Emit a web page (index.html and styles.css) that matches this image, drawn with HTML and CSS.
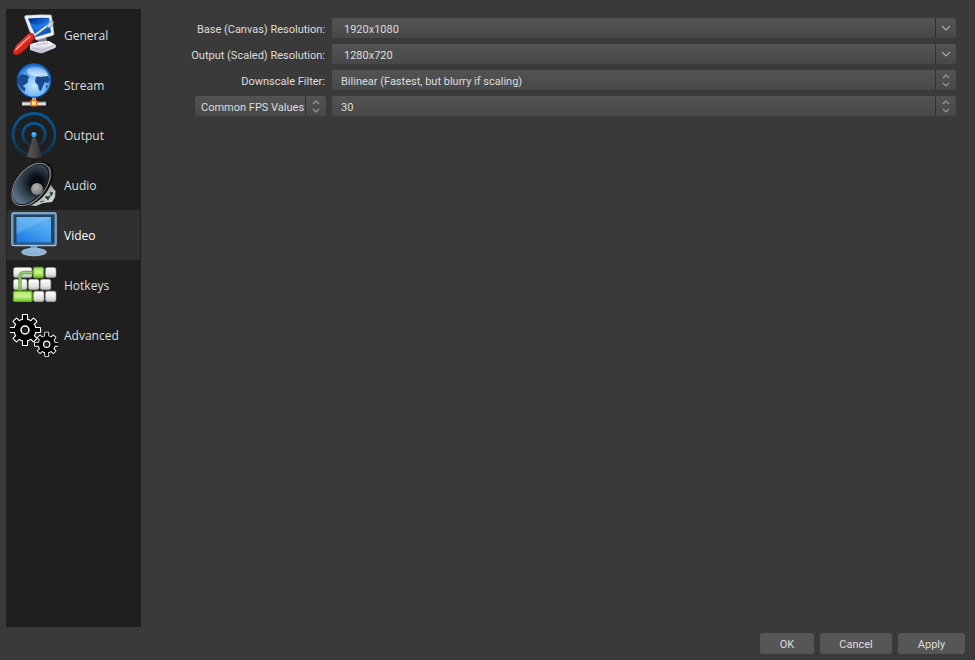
FILE: index.html
```html
<!DOCTYPE html>
<html lang="en">
<head>
<meta charset="utf-8">
<title>Settings</title>
<link rel="stylesheet" href="styles.css">
</head>
<body>
<svg class="defs" aria-hidden="true">
  <defs>
    <linearGradient id="screen" x1="0" y1="0" x2="1" y2="1"><stop offset="0" stop-color="#032d8d"/><stop offset=".5" stop-color="#1269d8"/><stop offset="1" stop-color="#0647a8"/></linearGradient>
    <linearGradient id="red" x1="0" y1="0" x2="1" y2="1"><stop offset=".2" stop-color="#f0685c"/><stop offset=".5" stop-color="#dd2a20"/><stop offset="1" stop-color="#9c0d0a"/></linearGradient>
    <linearGradient id="base" x1="0" y1="0" x2="0" y2="1"><stop offset="0" stop-color="#ffffff"/><stop offset="1" stop-color="#b9bbd0"/></linearGradient>
    <radialGradient id="globe" cx=".5" cy=".65" r=".6"><stop offset="0" stop-color="#c2e8ff"/><stop offset=".6" stop-color="#6db4f5"/><stop offset="1" stop-color="#2374d2"/></radialGradient>
    <linearGradient id="shine" x1="0" y1="0" x2="0" y2="1"><stop offset="0" stop-color="#d5eaff" stop-opacity=".35"/><stop offset="1" stop-color="#e4f1ff" stop-opacity=".85"/></linearGradient>
    <linearGradient id="ring" x1="0" y1="0" x2="0" y2="1"><stop offset="0" stop-color="#075897"/><stop offset=".6" stop-color="#074775"/><stop offset="1" stop-color="#152c3d"/></linearGradient>
    <linearGradient id="mast" x1="0" y1="0" x2="1" y2="0"><stop offset="0" stop-color="#555"/><stop offset=".5" stop-color="#484848"/><stop offset="1" stop-color="#2c2c2c"/></linearGradient>
    <radialGradient id="cone" gradientUnits="userSpaceOnUse" cx="26" cy="27" r="25"><stop offset=".25" stop-color="#0a0f15"/><stop offset=".6" stop-color="#2f3d4b"/><stop offset="1" stop-color="#5a6e86"/></radialGradient>
    <radialGradient id="cap" cx=".4" cy=".35" r=".7"><stop offset="0" stop-color="#b4b4b4"/><stop offset="1" stop-color="#777"/></radialGradient>
    <linearGradient id="magnet" x1="0" y1="0" x2="1" y2="1"><stop offset="0" stop-color="#eef2f1"/><stop offset=".5" stop-color="#a9b1b0"/><stop offset="1" stop-color="#e9eded"/></linearGradient>
    <linearGradient id="lcd" x1=".8" y1="0" x2=".2" y2="1"><stop offset="0" stop-color="#62b4f2"/><stop offset=".5" stop-color="#42a0ef"/><stop offset="1" stop-color="#1c7be5"/></linearGradient>
    <linearGradient id="key" x1="0" y1="0" x2="0" y2="1"><stop offset="0" stop-color="#fff"/><stop offset=".65" stop-color="#e4e6e2"/><stop offset="1" stop-color="#b5b8b2"/></linearGradient>
    <linearGradient id="greenkey" x1="0" y1="0" x2="0" y2="1"><stop offset="0" stop-color="#b0ec68"/><stop offset=".5" stop-color="#c8f592"/><stop offset="1" stop-color="#76cb20"/></linearGradient>
    <g id="teeth"><circle r="10.500"/><path d="M-2-15h4v30h-4zM-15-2h30v4h-30z"/><path transform="rotate(45)" d="M-2-14h4v28h-4zM-14-2h28v4h-28z"/></g>
    <g id="gear"><use href="#teeth" fill="#fff" stroke="#fff" stroke-width="2.200" stroke-linejoin="round"/><use href="#teeth" fill="#000"/><circle r="4" fill="#1f1f1f" stroke="#fff" stroke-width="1.500"/></g>
    <g id="down"><path d="M2 4l4 4 4-4" fill="none" stroke="#aaa" stroke-width="1.200"/></g>
    <g id="updown"><path d="M3 5l3-3 3 3M3 10l3 3 3-3" fill="none" stroke="#999" stroke-width="1.200"/></g>
  </defs>
</svg>
<div class="dialog">
  <nav class="sidebar" aria-label="Settings pages">
    <button class="page" type="button">
      <svg class="icon" viewBox="0 0 48 48" aria-hidden="true">
        <path d="M27 27l8-3 3 8-9 2z" fill="#8084a0"/>
        <path d="M20 33l8-2 11-1 6 3.500q2 1.500 0 3.500l-12 5q-1.500.6-3 .2L20 39z" fill="url(#base)"/>
        <path d="M23 37l9 2 12-4.500M26 33.500l12-1.500" fill="none" stroke="#a5a8c2" stroke-width=".8"/>
        <path d="M15.500 4.500Q29 3.500 40.500 4q.8 0 1 1L44 23q0 1-1.500 1.500L27 29q-1 0-1.500-1L20 21 14.500 6z" fill="#eef0fa" stroke="#b8bbd4" stroke-width=".6"/>
        <path d="M18 7.500Q29 6.500 39 7L41 21.500 26 26z" fill="url(#screen)"/>
        <path d="M20 12q10 4 19-3l1 5q-8 6-18 4z" fill="#2584ed" opacity=".6"/>
        <path d="M22 26.500L39 14" stroke="#53677c" stroke-width="3"/>
        <path d="M22 26L39 13.500" stroke="#e0e8ee" stroke-width="1.600"/>
        <path d="M37 15l2-4 4.500-1-.5 4-4 3z" fill="#c8d3dd" stroke="#65798c" stroke-width=".6"/>
        <path d="M3.500 39.500Q6 33 12 29l6-6q3-2 5 0 2 3 1.500 5L17 37q-6 6-10.500 7-4.500 0-3-4.500z" fill="url(#red)" stroke="#860b0b" stroke-width=".6"/>
        <path d="M6 38.500q7-7 14-13" fill="none" stroke="#ffada0" stroke-width="1.300" stroke-linecap="round"/>
      </svg>
      <span>General</span>
    </button>
    <button class="page" type="button">
      <svg class="icon" viewBox="0 0 48 48" aria-hidden="true">
        <path d="M24 36v6" stroke="#aaa" stroke-width="4"/>
        <rect x="12" y="40.500" width="24" height="4.500" fill="#777"/>
        <rect x="12" y="41.500" width="24" height="2.500" fill="#ddd"/>
        <rect x="20.500" y="39" width="7" height="6.500" rx="1" fill="#ef6915"/><rect x="22" y="40" width="4" height="4" fill="#ffe477"/>
        <circle cx="24" cy="19.500" r="16.700" fill="url(#globe)" stroke="#1558b8" stroke-width="1.200"/>
        <path d="M8.500 16l3-3 5 1 3 2-2 3 1 2-4 3-2 1 3 2-1 4-4-4-2-4-2-3z" fill="#174b8c"/>
        <path d="M26 16l5-2 7 1 2 4-2 3-3-1-2 4-2 5-2-1-1-5-3-3z" fill="#174b8c"/>
        <path d="M36 24l2 1-2 3z" fill="#174b8c"/>
        <path d="M17 8q10-5 18 1 3 3 3 6-12 2-19-2-3-2-2-5z" fill="url(#shine)"/>
      </svg>
      <span>Stream</span>
    </button>
    <button class="page" type="button">
      <svg class="icon" viewBox="0 0 48 48" aria-hidden="true">
        <g fill="none" stroke="url(#ring)" stroke-width="2.800"><circle cx="24" cy="23.500" r="21"/><circle cx="24" cy="23.500" r="11.200"/></g>
        <path d="M23 25h2l7.500 20.500Q24 49 17 45.500z" fill="url(#mast)"/>
        <circle cx="24" cy="23.500" r="2.600" fill="#2c9bf0"/><circle cx="23.500" cy="22.500" r="1.100" fill="#8cd3ff"/>
      </svg>
      <span>Output</span>
    </button>
    <button class="page" type="button">
      <svg class="icon" viewBox="0 0 48 48" aria-hidden="true">
        <path d="M40 21l2 5 3.500 4-.5 6-3 5-9 1-7 3-9-1z" fill="url(#magnet)"/>
        <path d="M40 31l3 1-2 3zM35 36l5-1-2 4zM30 41l4-1" fill="#222b2e" stroke="#4c5556"/>
        <ellipse cx="23.500" cy="23.500" rx="26" ry="15" transform="rotate(-52 23.500 23.500)" fill="#0c0c0c"/>
        <path d="M39 5q5 9-3 22-7 11-17 17" fill="none" stroke="#7b7d7d" stroke-width=".8"/>
        <ellipse cx="21" cy="23.500" rx="24.500" ry="14.500" transform="rotate(-51 21 23.500)" fill="#151a1f" stroke="#8d9190"/>
        <ellipse cx="20.500" cy="23.500" rx="23" ry="13.200" transform="rotate(-51 20.500 23.500)" fill="url(#cone)"/>
        <circle cx="27" cy="28" r="6" fill="url(#cap)"/>
      </svg>
      <span>Audio</span>
    </button>
    <button class="page selected" type="button" aria-current="page">
      <svg class="icon" viewBox="0 0 48 48" aria-hidden="true">
        <path d="M20.500 34h7v4h-7z" fill="#6f9cc8"/>
        <ellipse cx="24" cy="41" rx="12.700" ry="4.300" fill="#94b8da"/><path d="M15 41q9 4 18 0" fill="none" stroke="#83acd2"/>
        <rect x="2" y="2" width="44" height="32.500" rx="1.500" fill="#214361" stroke="#9cc3e6" stroke-width="1.400"/>
        <rect x="3.500" y="3.500" width="41" height="29.500" fill="none" stroke="#456f94"/>
        <path d="M6.500 6h34.500v25.500H6.500z" fill="url(#lcd)"/>
        <path d="M6.500 6h34.500L6.500 23z" fill="#9bd0f7" opacity=".3"/>
      </svg>
      <span>Video</span>
    </button>
    <button class="page" type="button">
      <svg class="icon" viewBox="0 0 48 48" aria-hidden="true">
        <g fill="url(#key)" stroke="#999c96" stroke-width=".6">
          <rect x="3.500" y="6.500" width="18.500" height="10" rx="2"/><rect x="35.500" y="6.500" width="10.500" height="10" rx="2"/>
          <rect x="3.500" y="18.300" width="13.500" height="10.500" rx="2"/><rect x="18.500" y="18.300" width="10.500" height="10.500" rx="2"/><rect x="30.300" y="18.300" width="10.500" height="10.500" rx="2"/>
          <rect x="23.500" y="30.200" width="10.500" height="10.500" rx="2"/><rect x="35.500" y="30.200" width="10.500" height="10.500" rx="2"/>
        </g>
        <g fill="url(#greenkey)" stroke="#61b516" stroke-width="1.400"><rect x="23.500" y="6.500" width="10" height="10" rx="2"/><rect x="3.500" y="30.200" width="18.500" height="10.200" rx="2"/></g>
        <path d="M10 30V16q0-4.500 4.500-4.500H23" fill="none" stroke="#62a630" stroke-width="3.600" opacity=".85"/>
        <path d="M10 29V16q0-4.500 4.500-4.500H22" fill="none" stroke="#a0cd7c" stroke-width="1.200"/>
      </svg>
      <span>Hotkeys</span>
    </button>
    <button class="page" type="button">
      <svg class="icon" viewBox="0 0 48 48" aria-hidden="true">
        <use href="#gear" transform="translate(15 19)"/>
        <use href="#gear" transform="translate(36.700 33.300) scale(.78)"/>
      </svg>
      <span>Advanced</span>
    </button>
  </nav>
  <main class="form">
    <label class="label" for="base-res">Base (Canvas) Resolution:</label>
    <div class="combo editable">
      <input id="base-res" class="field" type="text" value="1920x1080">
      <button class="drop" type="button" aria-label="Show base resolutions"><svg class="chevron" viewBox="0 0 12 12"><use href="#down"/></svg></button>
    </div>
    <label class="label" for="out-res">Output (Scaled) Resolution:</label>
    <div class="combo editable">
      <input id="out-res" class="field" type="text" value="1280x720">
      <button class="drop" type="button" aria-label="Show output resolutions"><svg class="chevron" viewBox="0 0 12 12"><use href="#down"/></svg></button>
    </div>
    <label class="label" for="filter">Downscale Filter:</label>
    <div class="combo">
      <select id="filter" class="field"><option>Bilinear (Fastest, but blurry if scaling)</option></select>
      <span class="drop"><svg class="arrows" viewBox="0 0 12 14"><use href="#updown"/></svg></span>
    </div>
    <div class="combo fps-type">
      <select class="field" aria-label="FPS type"><option>Common FPS Values</option></select>
      <span class="drop"><svg class="arrows" viewBox="0 0 12 14"><use href="#updown"/></svg></span>
    </div>
    <div class="combo">
      <select class="field" aria-label="FPS"><option>30</option></select>
      <span class="drop"><svg class="arrows" viewBox="0 0 12 14"><use href="#updown"/></svg></span>
    </div>
  </main>
  <footer class="actions">
    <button class="action" type="button">OK</button>
    <button class="action wide" type="button">Cancel</button>
    <button class="action medium" type="button">Apply</button>
  </footer>
</div>
</body>
</html>
```
FILE: styles.css
```css
* { box-sizing: border-box; }

body {
  margin: 0;
  background: #3a3a3a;
  color: #dedede;
  font: 11px/20px Tahoma, Roboto, sans-serif;
}

button, input, select {
  margin: 0;
  border: 0;
  color: inherit;
  font: inherit;
}

.defs { position: absolute; width: 0; height: 0; }

.dialog {
  display: grid;
  grid-template: 1fr auto / 135px 1fr;
  gap: 6px 0;
  min-height: 100vh;
  padding: 9px 10px 6px 6px;
}

.sidebar {
  padding: 1px;
  background: #1f1f1f;
}

.page {
  display: flex;
  align-items: center;
  gap: 6px;
  width: 100%;
  height: 50px;
  padding: 0 3px;
  background: transparent;
  font-family: "Open Sans", "Noto Sans", sans-serif;
  font-size: 12px;
  text-align: left;
}

.page span { padding-top: 2px; }

.page.selected { background: #303030; color: #fff; }

.icon { flex: none; width: 48px; height: 48px; }

.form {
  display: grid;
  grid-template-columns: 176px 1fr;
  align-content: start;
  gap: 6px;
  padding: 9px 9px 0;
}

.label {
  padding-right: 1px;
  text-align: right;
  line-height: 24px;
  height: 20px;
}

.combo {
  display: grid;
  grid-template-columns: 1fr 21px;
  height: 20px;
  border-radius: 3px;
  background: linear-gradient(#535353, #484848);
}

.editable { border-radius: 0 3px 3px 0; }

.fps-type { justify-self: end; width: 131px; }

.field {
  grid-area: 1 / 1;
  min-width: 0;
  width: 100%;
  height: 20px;
  padding: 2px 0 0 9px;
  background: transparent;
  appearance: none;
}

.editable .field { padding: 3px 0 0 12px; }

.fps-type .field { padding-left: 6px; }

select.field { grid-column: 1 / 3; }

.drop {
  grid-area: 1 / 2;
  display: flex;
  align-items: center;
  justify-content: center;
  padding: 0;
  border-left: 1px solid #323232;
  background: transparent;
  pointer-events: none;
}

button.drop { pointer-events: auto; }

.chevron { width: 12px; height: 12px; }
.arrows { width: 12px; height: 14px; }

.actions {
  grid-column: 1 / 3;
  display: flex;
  justify-content: flex-end;
  gap: 6px;
}

.action {
  width: 54px;
  height: 21px;
  padding: 2px 0 0;
  border-radius: 3px;
  background: #565656;
}

.action.wide { width: 72px; }
.action.medium { width: 67px; }
```
